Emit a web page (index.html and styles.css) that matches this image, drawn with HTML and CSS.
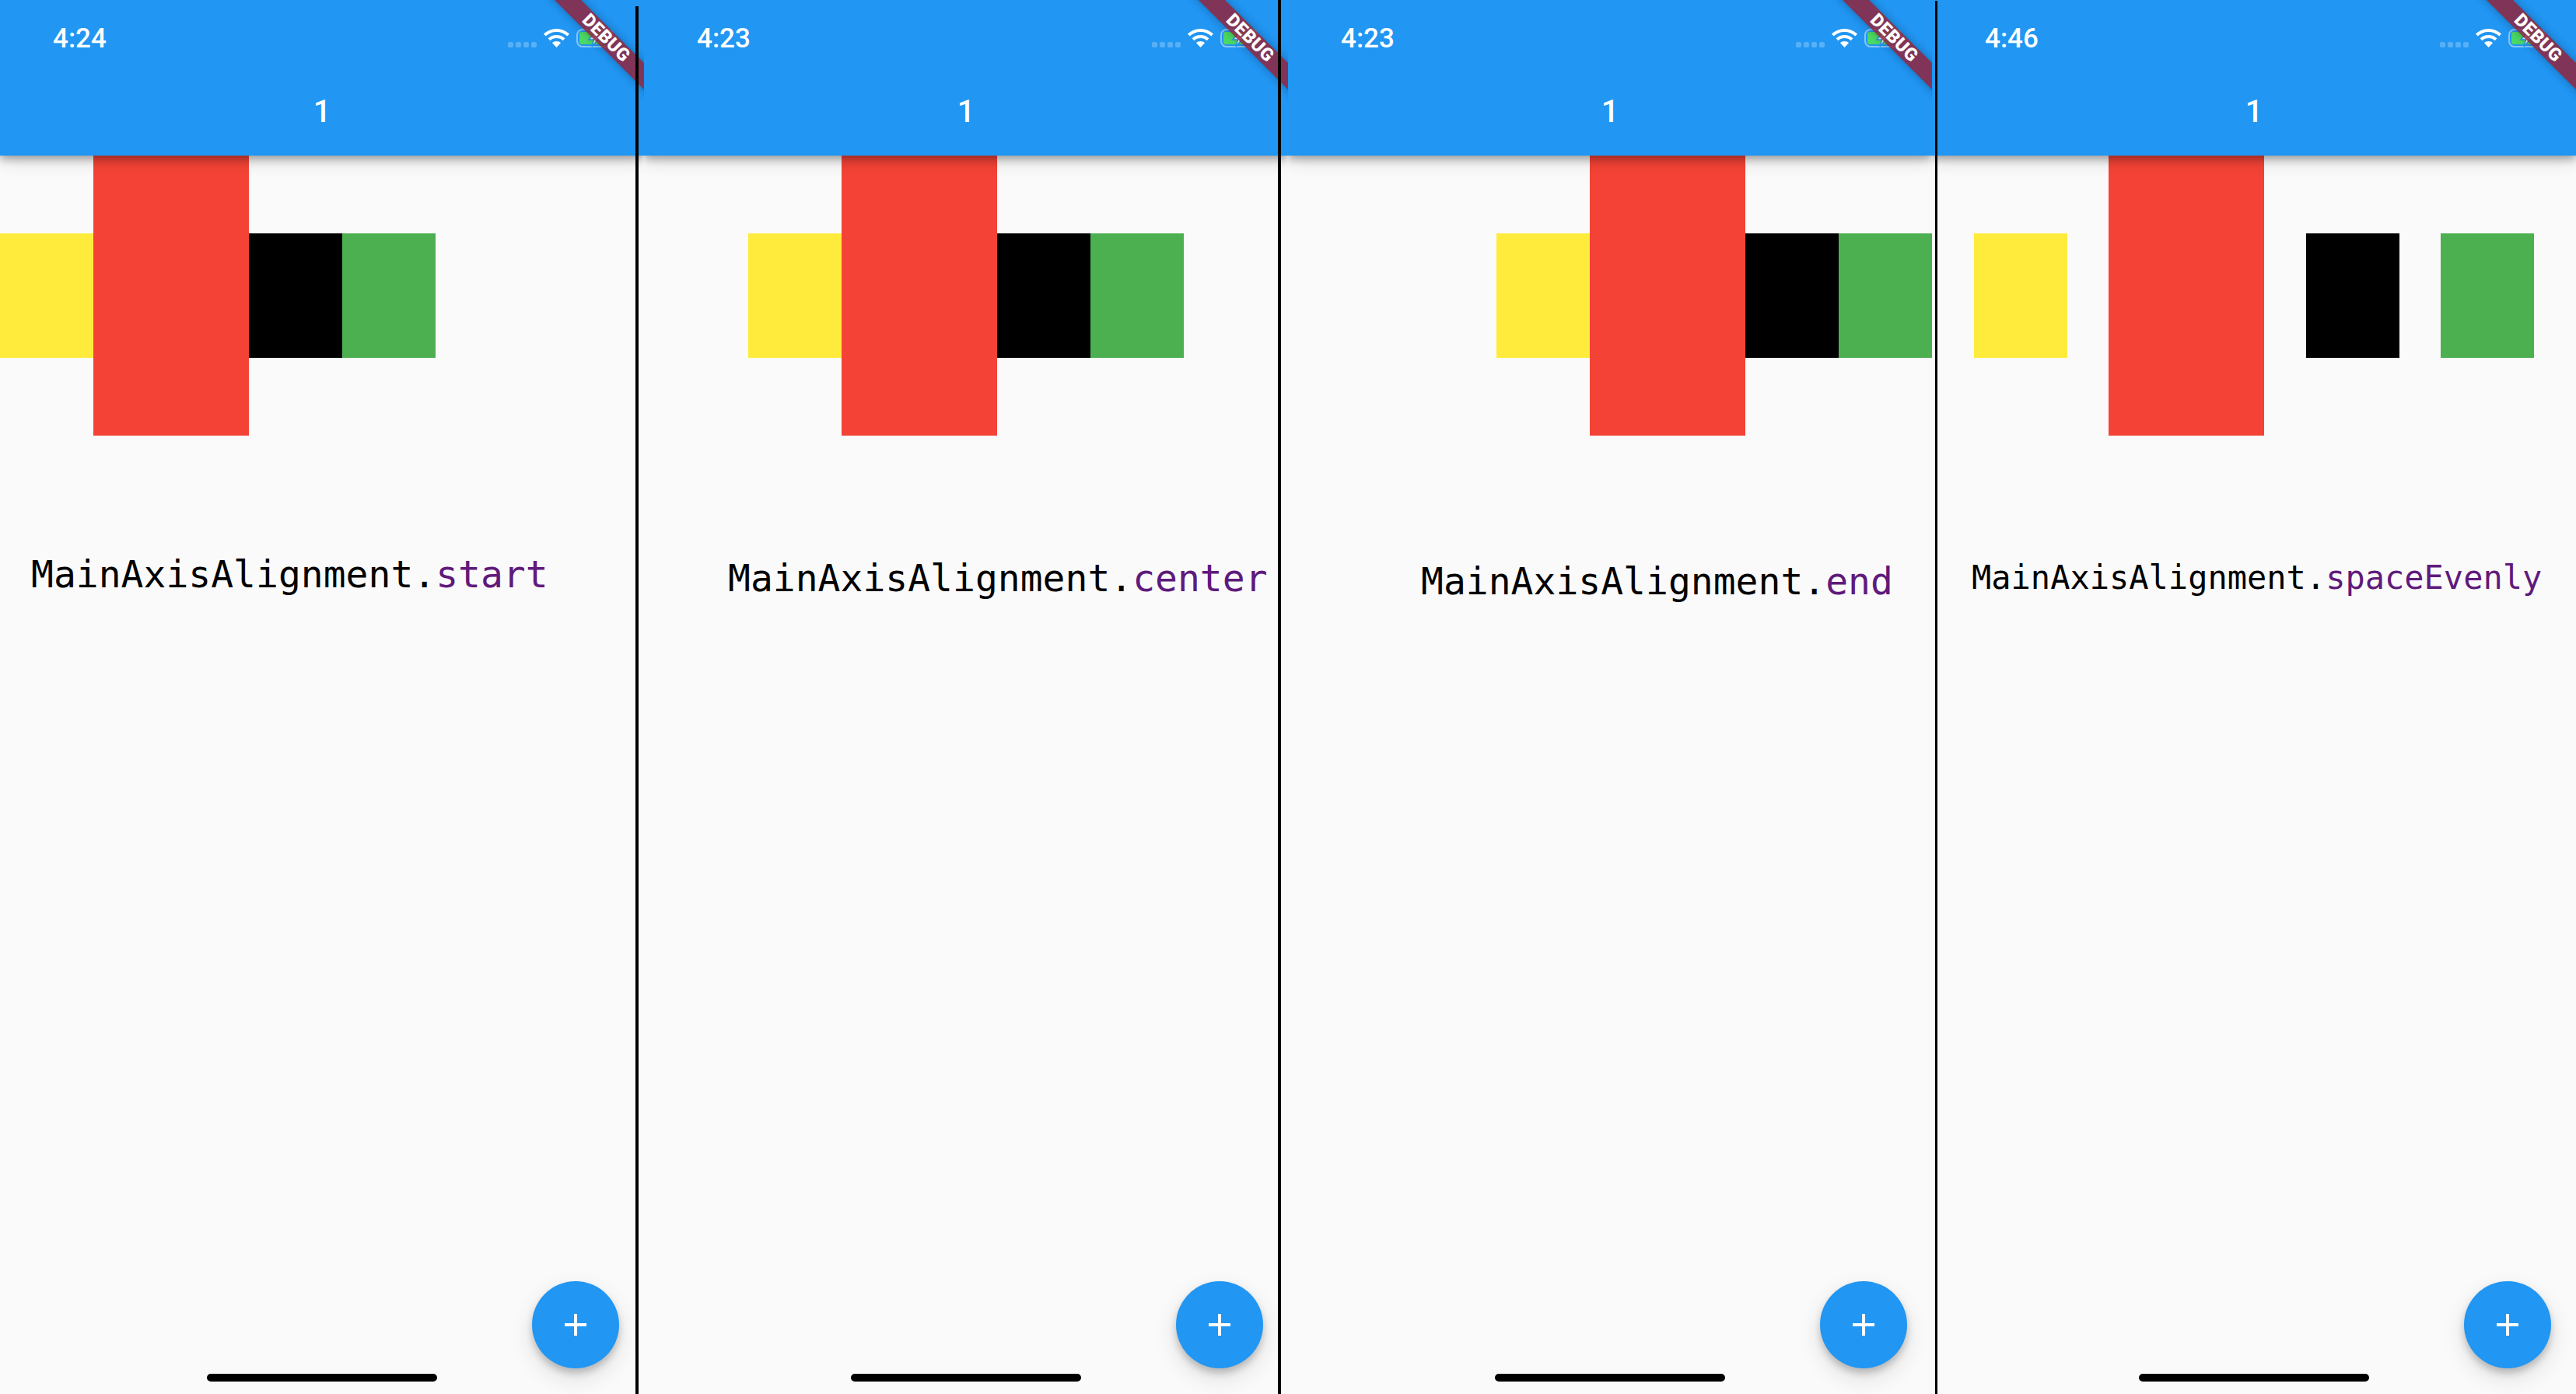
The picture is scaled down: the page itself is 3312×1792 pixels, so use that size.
FILE: index.html
```html
<!DOCTYPE html>
<html lang="en">
<head>
<meta charset="utf-8">
<title>MainAxisAlignment</title>
<link rel="stylesheet" href="styles.css">
</head>
<body>
<div class="shots">

  <div class="phone">
    <div class="appbar">
      <div class="status">
        <span class="time">4:24</span>
        <span class="dots"><i></i><i></i><i></i><i></i></span>
        <svg class="wifi" viewBox="0 0 33 24"><path d="M16.5 0C10.2 0 4.6 2.4 0 6.4l2.6 3C6.4 5.9 11.2 3.9 16.5 3.9s10.100 2 13.900 5.500l2.600-3C28.400 2.400 22.800 0 16.500 0z"/><path d="M16.500 8c-4.100 0-7.900 1.600-10.900 4.200l2.700 3c2.200-2 5.100-3.200 8.200-3.200s6 1.200 8.200 3.200l2.700-3C24.400 9.600 20.600 8 16.500 8z"/><path d="M16.500 16c-2.200 0-4.100.8-5.600 2.100l5.600 5.900 5.600-5.900c-1.500-1.300-3.400-2.100-5.600-2.100z"/></svg>
        <svg class="battery" viewBox="0 0 54 24"><rect class="battery-case" x="1" y="1" width="46" height="22" rx="7"/><rect class="battery-level" x="4" y="4" width="32" height="16" rx="3"/><path class="battery-nub" d="M49.500 8.500c2 .6 3 2 3 3.500s-1 2.900-3 3.500z"/><path class="battery-bolt" d="M27 2 16 14h6.500L20 23l11-13h-6.500z"/></svg>
      </div>
      <div class="title">1</div>
    </div>
    <div class="boxes boxes-start">
      <div class="box box-yellow"></div>
      <div class="box box-red"></div>
      <div class="box box-black"></div>
      <div class="box box-green"></div>
    </div>
    <p class="caption caption-start">MainAxisAlignment.<span class="value">start</span></p>
    <div class="fab"><svg viewBox="0 0 24 24"><path d="M19 13h-6v6h-2v-6H5v-2h6V5h2v6h6v2z"/></svg></div>
    <div class="home-bar"></div>
    <div class="banner">DEBUG</div>
  </div>

  <div class="phone">
    <div class="appbar">
      <div class="status">
        <span class="time">4:23</span>
        <span class="dots"><i></i><i></i><i></i><i></i></span>
        <svg class="wifi" viewBox="0 0 33 24"><path d="M16.5 0C10.2 0 4.6 2.4 0 6.4l2.6 3C6.4 5.9 11.2 3.9 16.5 3.9s10.100 2 13.900 5.500l2.600-3C28.400 2.400 22.800 0 16.500 0z"/><path d="M16.500 8c-4.100 0-7.900 1.600-10.900 4.200l2.700 3c2.200-2 5.100-3.200 8.200-3.200s6 1.200 8.200 3.200l2.700-3C24.400 9.600 20.600 8 16.500 8z"/><path d="M16.500 16c-2.200 0-4.100.8-5.600 2.100l5.600 5.900 5.600-5.900c-1.500-1.300-3.400-2.100-5.600-2.100z"/></svg>
        <svg class="battery" viewBox="0 0 54 24"><rect class="battery-case" x="1" y="1" width="46" height="22" rx="7"/><rect class="battery-level" x="4" y="4" width="32" height="16" rx="3"/><path class="battery-nub" d="M49.500 8.500c2 .6 3 2 3 3.500s-1 2.900-3 3.500z"/><path class="battery-bolt" d="M27 2 16 14h6.500L20 23l11-13h-6.500z"/></svg>
      </div>
      <div class="title">1</div>
    </div>
    <div class="boxes boxes-center">
      <div class="box box-yellow"></div>
      <div class="box box-red"></div>
      <div class="box box-black"></div>
      <div class="box box-green"></div>
    </div>
    <p class="caption caption-center">MainAxisAlignment.<span class="value">center</span></p>
    <div class="fab"><svg viewBox="0 0 24 24"><path d="M19 13h-6v6h-2v-6H5v-2h6V5h2v6h6v2z"/></svg></div>
    <div class="home-bar"></div>
    <div class="banner">DEBUG</div>
  </div>

  <div class="phone">
    <div class="appbar">
      <div class="status">
        <span class="time">4:23</span>
        <span class="dots"><i></i><i></i><i></i><i></i></span>
        <svg class="wifi" viewBox="0 0 33 24"><path d="M16.5 0C10.2 0 4.6 2.4 0 6.4l2.6 3C6.4 5.9 11.2 3.9 16.5 3.9s10.100 2 13.900 5.500l2.600-3C28.400 2.400 22.800 0 16.500 0z"/><path d="M16.500 8c-4.100 0-7.900 1.600-10.900 4.200l2.700 3c2.200-2 5.100-3.200 8.200-3.200s6 1.200 8.200 3.200l2.700-3C24.400 9.600 20.600 8 16.500 8z"/><path d="M16.500 16c-2.200 0-4.100.8-5.600 2.100l5.600 5.900 5.600-5.900c-1.500-1.300-3.400-2.100-5.600-2.100z"/></svg>
        <svg class="battery" viewBox="0 0 54 24"><rect class="battery-case" x="1" y="1" width="46" height="22" rx="7"/><rect class="battery-level" x="4" y="4" width="32" height="16" rx="3"/><path class="battery-nub" d="M49.500 8.500c2 .6 3 2 3 3.500s-1 2.900-3 3.500z"/><path class="battery-bolt" d="M27 2 16 14h6.500L20 23l11-13h-6.500z"/></svg>
      </div>
      <div class="title">1</div>
    </div>
    <div class="boxes boxes-end">
      <div class="box box-yellow"></div>
      <div class="box box-red"></div>
      <div class="box box-black"></div>
      <div class="box box-green"></div>
    </div>
    <p class="caption caption-end">MainAxisAlignment.<span class="value">end</span></p>
    <div class="fab"><svg viewBox="0 0 24 24"><path d="M19 13h-6v6h-2v-6H5v-2h6V5h2v6h6v2z"/></svg></div>
    <div class="home-bar"></div>
    <div class="banner">DEBUG</div>
  </div>

  <div class="phone">
    <div class="appbar">
      <div class="status">
        <span class="time">4:46</span>
        <span class="dots"><i></i><i></i><i></i><i></i></span>
        <svg class="wifi" viewBox="0 0 33 24"><path d="M16.5 0C10.2 0 4.6 2.4 0 6.4l2.6 3C6.4 5.9 11.2 3.9 16.5 3.9s10.100 2 13.900 5.500l2.600-3C28.400 2.400 22.800 0 16.500 0z"/><path d="M16.500 8c-4.100 0-7.900 1.600-10.900 4.200l2.700 3c2.200-2 5.100-3.200 8.200-3.200s6 1.200 8.200 3.200l2.700-3C24.400 9.600 20.600 8 16.500 8z"/><path d="M16.500 16c-2.200 0-4.100.8-5.600 2.100l5.600 5.900 5.600-5.900c-1.500-1.300-3.400-2.100-5.600-2.100z"/></svg>
        <svg class="battery" viewBox="0 0 54 24"><rect class="battery-case" x="1" y="1" width="46" height="22" rx="7"/><rect class="battery-level" x="4" y="4" width="32" height="16" rx="3"/><path class="battery-nub" d="M49.500 8.500c2 .6 3 2 3 3.500s-1 2.900-3 3.500z"/><path class="battery-bolt" d="M27 2 16 14h6.500L20 23l11-13h-6.500z"/></svg>
      </div>
      <div class="title">1</div>
    </div>
    <div class="boxes boxes-evenly">
      <div class="box box-yellow"></div>
      <div class="box box-red"></div>
      <div class="box box-black"></div>
      <div class="box box-green"></div>
    </div>
    <p class="caption caption-evenly">MainAxisAlignment.<span class="value">spaceEvenly</span></p>
    <div class="fab"><svg viewBox="0 0 24 24"><path d="M19 13h-6v6h-2v-6H5v-2h6V5h2v6h6v2z"/></svg></div>
    <div class="home-bar"></div>
    <div class="banner">DEBUG</div>
  </div>

  <div class="rule rule-1"></div>
  <div class="rule rule-2"></div>
  <div class="rule rule-3"></div>
</div>
</body>
</html>
```

FILE: styles.css
```css
html, body {
    margin: 0;
    padding: 0;
    background: #fafafa;
}

.shots {
    position: relative;
    display: grid;
    grid-template-columns: repeat(4, 828px);
    width: 3312px;
    height: 1792px;
    overflow: hidden;
}

/* one phone screen */
.phone {
    position: relative;
    height: 1792px;
    overflow: hidden;
    background: #fafafa;
}

.appbar {
    position: relative;
    z-index: 2;
    height: 200px;
    background: #2196f3;
    box-shadow: 0 4px 10px rgba(0,0,0,.3), 0 8px 20px rgba(0,0,0,.14);
    color: #fff;
    font-family: Roboto, "Liberation Sans", sans-serif;
}

.status {
    display: flex;
    align-items: center;
    height: 98px;
    padding-left: 68px;
}
.time {
    width: 585px;
    font-size: 35px;
    font-weight: 500;
}
.dots {
    display: flex;
    gap: 3px;
    width: 46px;
    margin-top: 17px;
}
.dots i {
    display: block;
    width: 7px;
    height: 7px;
    border-radius: 2px;
    background: rgba(255,255,255,.25);
}
.wifi {
    width: 33px;
    height: 24px;
    fill: #fff;
}
.battery {
    width: 54px;
    height: 24px;
    margin-left: 9px;
}
.battery-case {
    fill: none;
    stroke: rgba(255,255,255,.45);
    stroke-width: 2;
}
.battery-level {
    fill: #4cd964;
}
.battery-nub {
    fill: rgba(255,255,255,.45);
}
.battery-bolt {
    fill: #fff;
    stroke: #2196f3;
    stroke-width: 1.5;
}

.title {
    margin-top: 22px;
    font-size: 40px;
    font-weight: 500;
    line-height: 48px;
    text-align: center;
}

/* the row under test */
.boxes {
    display: flex;
    align-items: center;
    height: 360px;
}
.boxes-start { justify-content: flex-start; }
.boxes-center { justify-content: center; }
.boxes-end { justify-content: flex-end; }
.boxes-evenly { justify-content: space-evenly; }

.box {
    width: 120px;
    height: 160px;
}
.box-yellow { background: #ffeb3b; }
.box-red { width: 200px; height: 360px; background: #f44336; }
.box-black { background: #000; }
.box-green { background: #4caf50; }

.caption {
    margin: 0;
    font-family: "DejaVu Sans Mono", "Liberation Mono", monospace;
    font-size: 48px;
    line-height: 56px;
    color: #000;
    white-space: nowrap;
}
.caption-start { margin: 150px 0 0 40px; }
.caption-center { margin: 155px 0 0 108px; }
.caption-end { margin: 159px 0 0 171px; }
.caption-evenly { margin: 155px 0 0 51px; font-size: 42px; }
.value { color: #5f1a7c; }

.fab {
    position: absolute;
    right: 32px;
    bottom: 33px;
    display: flex;
    align-items: center;
    justify-content: center;
    width: 112px;
    height: 112px;
    border-radius: 50%;
    background: #2196f3;
    box-shadow: 0 6px 10px rgba(0,0,0,.2), 0 12px 30px rgba(0,0,0,.12);
}
.fab svg {
    width: 48px;
    height: 48px;
    fill: #fff;
}

.home-bar {
    position: absolute;
    left: 266px;
    bottom: 16px;
    width: 296px;
    height: 10px;
    border-radius: 5px;
    background: #000;
}

.banner {
    position: absolute;
    z-index: 3;
    top: 37px;
    left: 679px;
    width: 200px;
    height: 24px;
    background: rgba(145,37,60,.85);
    box-shadow: 0 0 12px rgba(0,0,0,.3);
    color: #fff;
    font-family: Roboto, "Liberation Sans", sans-serif;
    font-size: 23px;
    font-weight: 900;
    line-height: 24px;
    letter-spacing: .5px;
    text-align: center;
    transform: rotate(45deg);
}

/* black lines between the screenshots */
.rule {
    position: absolute;
    z-index: 4;
    bottom: 0;
    width: 4px;
    background: #000;
}
.rule-1 { top: 8px; left: 817px; }
.rule-2 { top: 0; left: 1643px; }
.rule-3 { top: 1px; left: 2488px; width: 3px; }
```
